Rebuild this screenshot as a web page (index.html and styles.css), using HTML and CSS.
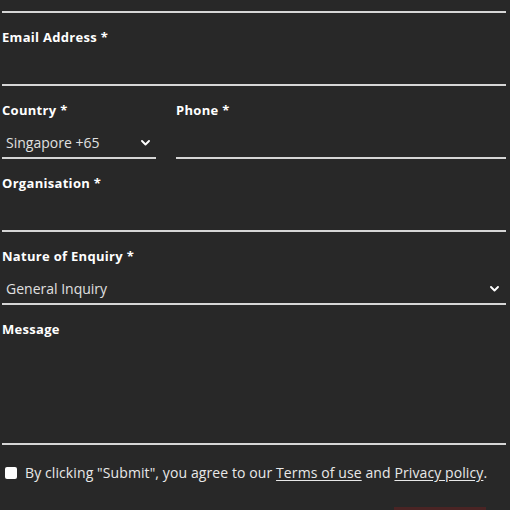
FILE: index.html
```html
<!DOCTYPE html>
<html lang="en">
<head>
<meta charset="utf-8">
<title>Enquiry form</title>
<link rel="stylesheet" href="styles.css">
</head>
<body>
<form class="form">
  <div class="input input-prev"></div>

  <div class="field">
    <label class="label">Email Address *</label>
    <div class="input"></div>
  </div>

  <div class="row">
    <div class="field">
      <label class="label">Country *</label>
      <div class="input select select-country">
        <span>Singapore +65</span>
        <svg class="chev" width="9" height="6" viewBox="0 0 9 6"><polyline points="1,1 4.5,4.5 8,1" fill="none" stroke="#fff" stroke-width="1.9" stroke-linecap="round" stroke-linejoin="round"/></svg>
      </div>
    </div>
    <div class="field">
      <label class="label">Phone *</label>
      <div class="input"></div>
    </div>
  </div>

  <div class="field">
    <label class="label">Organisation *</label>
    <div class="input"></div>
  </div>

  <div class="field">
    <label class="label">Nature of Enquiry *</label>
    <div class="input select select-nature">
      <span>General Inquiry</span>
      <svg class="chev" width="9" height="6" viewBox="0 0 9 6"><polyline points="1,1 4.5,4.5 8,1" fill="none" stroke="#fff" stroke-width="1.9" stroke-linecap="round" stroke-linejoin="round"/></svg>
    </div>
  </div>

  <div class="field">
    <label class="label">Message</label>
    <div class="input textarea"></div>
  </div>

  <div class="consent">
    <span class="checkbox"></span>
    <span class="consent-text">By clicking "Submit", you agree to our <a class="link">Terms of use</a> and <a class="link">Privacy policy</a>.</span>
  </div>

  <div class="actions">
    <span class="submit"></span>
  </div>
</form>
</body>
</html>
```

FILE: styles.css
```css
html, body {
  margin: 0;
  height: 510px;
  overflow: hidden;
  background: #282828;
}

body {
  font-family: "Open Sans", "Liberation Sans", sans-serif;
  color: #fff;
}

.form {
  padding: 0 4px 0 2px;
}

.input {
  box-sizing: border-box;
  height: 39px;
  border-bottom: 2px solid #d6d6d6;
  color: #e0e0e0;
  font-size: 14px;
  padding: 8px 3px 0 4px;
}

.input-prev {
  height: 13px;
  padding: 0;
}

.field {
  padding-top: 14px;
}

.label {
  display: block;
  font-weight: 700;
  font-size: 13px;
  line-height: 20px;
  letter-spacing: 0.3px;
  color: #fff;
}

.row {
  display: grid;
  grid-template-columns: 154px 1fr;
  column-gap: 20px;
}

.select {
  display: flex;
  align-items: center;
  justify-content: space-between;
}

.select-country {
  padding-right: 6px;
}

.select-nature {
  padding-right: 7px;
}

.chev {
  display: block;
}

.textarea {
  height: 106px;
}

.consent {
  display: flex;
  align-items: center;
  gap: 8px;
  margin-top: 18px;
  padding-left: 3px;
  font-size: 14px;
  line-height: 20px;
  letter-spacing: 0.1px;
  color: #e8e8e8;
}

.checkbox {
  width: 12px;
  height: 12px;
  background: #fff;
  border-radius: 2px;
  flex: none;
}

.link {
  color: inherit;
  text-decoration: underline;
  text-underline-offset: 2px;
}

.actions {
  display: flex;
  justify-content: flex-end;
  padding-right: 20px;
  margin-top: 24px;
}

.submit {
  display: block;
  width: 92px;
  height: 40px;
  background: #4a2424;
}
```
